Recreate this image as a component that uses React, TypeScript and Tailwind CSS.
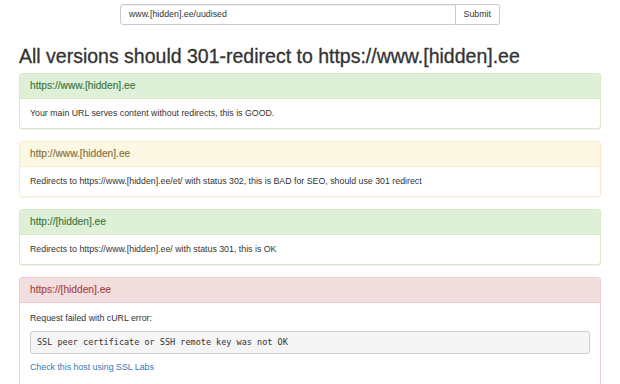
import React from 'react';

type Tone = 'success' | 'warning' | 'danger';

const tones: Record<Tone, { border: string; head: string }> = {
    success: { border: 'border-[#d6e9c6]', head: 'bg-[#dff0d8] text-[#3c763d] border-[#d6e9c6]' },
    warning: { border: 'border-[#faebcc]', head: 'bg-[#fcf8e3] text-[#8a6d3b] border-[#faebcc]' },
    danger: { border: 'border-[#ebccd1]', head: 'bg-[#f2dede] text-[#a94442] border-[#ebccd1]' },
};

const Panel: React.FC<{ tone: Tone; title: string; children: React.ReactNode }> = ({ tone, title, children }) => (
    <div className={`border ${tones[tone].border} rounded-[3px] bg-white shadow-[0_1px_1px_rgba(0,0,0,0.05)] overflow-hidden`}>
        <div className={`${tones[tone].head} border-b px-[10px] h-[25px] flex items-center text-[10.2px] [-webkit-text-stroke:0.15px]`}>
            {title}
        </div>
        <div className="px-[10px] py-[8px] text-[8.8px] leading-[13px] text-[#333]">{children}</div>
    </div>
);

export default function App() {
    return (
        <div className="w-[620px] h-[384px] overflow-hidden bg-white text-[#333]" style={{ fontFamily: '"Liberation Sans", Arial, sans-serif' }}>
            {/* Search form */}
            <div className="flex justify-center pt-[4px]">
                <div className="flex w-[380px] h-[21px] text-[8.8px]">
                    <div className="flex-1 flex items-center px-[8px] border border-[#ccc] rounded-l-[3px] shadow-[inset_0_1px_1px_rgba(0,0,0,0.075)]">
                        www.[hidden].ee/uudised
                    </div>
                    <button className="px-[8px] border border-l-0 border-[#ccc] rounded-r-[3px] bg-white text-[#333]">Submit</button>
                </div>
            </div>

            <div className="w-[582px] mx-auto">
                <h2 className="mt-[20px] mb-[6px] text-[19.5px] leading-[22px] font-normal text-[#333] [-webkit-text-stroke:0.3px]">
                    All versions should 301-redirect to https://www.[hidden].ee
                </h2>

                <div className="flex flex-col gap-[12px]">
                    <Panel tone="success" title="https://www.[hidden].ee">
                        Your main URL serves content without redirects, this is GOOD.
                    </Panel>
                    <Panel tone="warning" title="http://www.[hidden].ee">
                        Redirects to https://www.[hidden].ee/et/ with status 302, this is BAD for SEO, should use 301 redirect
                    </Panel>
                    <Panel tone="success" title="http://[hidden].ee">
                        Redirects to https://www.[hidden].ee/ with status 301, this is OK
                    </Panel>
                    <Panel tone="danger" title="https://[hidden].ee">
                        <p className="pt-[1px]">Request failed with cURL error:</p>
                        <pre className="mt-[6px] mb-[7px] px-[6px] h-[23px] flex items-center bg-[#f5f5f5] border border-[#ccc] rounded-[3px] text-[8.5px]" style={{ fontFamily: '"DejaVu Sans Mono", "Liberation Mono", monospace' }}>
                            SSL peer certificate or SSH remote key was not OK
                        </pre>
                        <a className="text-[#337ab7]" href="#">Check this host using SSL Labs</a>
                        <div className="h-[30px]" />
                    </Panel>
                </div>
            </div>
        </div>
    );
}
